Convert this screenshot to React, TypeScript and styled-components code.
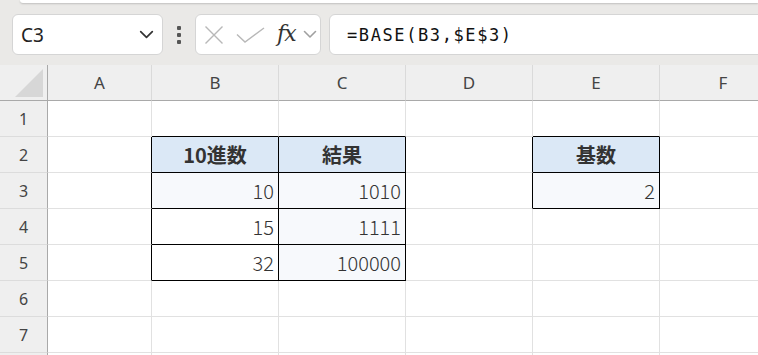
import * as React from "react"
import styled, { createGlobalStyle } from "styled-components"

const GlobalStyle = createGlobalStyle`
    html, body {
        margin: 0;
        padding: 0;
        background: #ffffff;
        overflow: hidden;
    }
    * {
        box-sizing: border-box;
    }
`

const Page = styled.div`
    width: 758px;
    height: 355px;
    overflow: hidden;
    font-family: "Noto Sans", "Noto Sans CJK JP", sans-serif;
`

const Toolbar = styled.div`
    height: 65px;
    background: #eae9e7;
    display: flex;
    flex-direction: column;
`

const TopStrip = styled.div`
    height: 3px;
    margin-left: 20px;
    background: #ffffff;
    border-bottom-left-radius: 4px;
    box-shadow: 0 1px 2px rgba(0, 0, 0, 0.18);
`

const FormulaRow = styled.div`
    display: flex;
    align-items: center;
    margin-top: 11px;
    padding-left: 12px;
    height: 41px;
`

const Box = styled.div`
    height: 41px;
    background: #ffffff;
    border: 1px solid #d5d5d5;
    border-radius: 6px;
    display: flex;
    align-items: center;
`

const NameBox = styled(Box)`
    width: 151px;
    padding: 0 8px 0 8px;
    justify-content: space-between;
    font-size: 19px;
    color: #222;
`

const Dots = styled.div`
    width: 32px;
    display: flex;
    flex-direction: column;
    align-items: center;
    gap: 3px;

    span {
        width: 4px;
        height: 4px;
        border-radius: 1px;
        background: #555;
    }
`

const FxBox = styled(Box)`
    width: 126px;
    padding-left: 8px;
    gap: 12px;
`

const FxText = styled.span`
    font-family: "DejaVu Serif", "Liberation Serif", serif;
    font-style: italic;
    font-weight: 400;
    font-size: 22px;
    letter-spacing: -1px;
    color: #333;
    margin-top: -3px;
    margin-right: -5px;
`

const FormulaBox = styled(Box)`
    flex: 1;
    margin-left: 8px;
    margin-right: -12px;
    padding-left: 17px;
    font-family: "DejaVu Sans Mono", "Liberation Mono", monospace;
    font-size: 17px;
    letter-spacing: 1.6px;
    color: #111;
`

const Sheet = styled.div`
    display: grid;
    grid-template-columns: 48px 104px repeat(5, 127px);
    grid-auto-rows: 36px;
`

const Corner = styled.div`
    background: #efefef;
    border-right: 1px solid #a9a9a9;
    border-bottom: 1px solid #a9a9a9;
    position: relative;

    svg {
        position: absolute;
        left: 15px;
        top: 4px;
    }
`

const ColHeader = styled.div`
    background: #efefef;
    border-right: 1px solid #dadada;
    border-bottom: 1px solid #a9a9a9;
    display: flex;
    align-items: center;
    justify-content: center;
    font-size: 17px;
    color: #444;
`

const RowHeader = styled.div`
    background: #efefef;
    border-right: 1px solid #a9a9a9;
    border-bottom: 1px solid #dcdcdc;
    display: flex;
    align-items: center;
    justify-content: center;
    font-size: 16px;
    color: #444;
`

const Cell = styled.div<{ $fill?: string; $darkRight?: boolean; $darkBottom?: boolean; $head?: boolean }>`
    background: ${(p) => p.$fill || "#ffffff"};
    border-right: 1px solid ${(p) => (p.$darkRight ? "#000" : "#e1e1e1")};
    border-bottom: 1px solid ${(p) => (p.$darkBottom ? "#000" : "#e1e1e1")};
    display: flex;
    align-items: center;
    justify-content: ${(p) => (p.$head ? "center" : "flex-end")};
    padding: 0 4px 0 4px;
    font-family: "Noto Sans CJK JP", "Noto Sans", sans-serif;
    font-size: 20px;
    font-weight: ${(p) => (p.$head ? 700 : 300)};
    color: #333;
`

const cols = ["A", "B", "C", "D", "E", "F"]

type CellData = { v: string; head?: boolean; tint?: boolean }

const data: Record<string, CellData> = {
    B2: { v: "10進数", head: true },
    C2: { v: "結果", head: true },
    E2: { v: "基数", head: true },
    B3: { v: "10", tint: true },
    C3: { v: "1010", tint: true },
    E3: { v: "2", tint: true },
    B4: { v: "15" },
    C4: { v: "1111", tint: true },
    B5: { v: "32" },
    C5: { v: "100000", tint: true },
}

const boxed = (c: number, r: number) => {
    const key = (cols[c] || "") + r
    return key in data
}

const ChevronDown = ({ color, w }: { color: string; w: number }) => (
    <svg width={w} height={w / 2 + 2} viewBox="0 0 14 9" fill="none">
        <path d="M1.5 1.5 L7 7 L12.5 1.5" stroke={color} strokeWidth="1.6" strokeLinecap="round" strokeLinejoin="round" />
    </svg>
)

export default function App() {
    // row 8 only peeks in at the bottom edge, so it gets no number
    const rows = [1, 2, 3, 4, 5, 6, 7, 8]
    return (
        <Page>
            <GlobalStyle />
            <Toolbar>
                <TopStrip />
                <FormulaRow>
                    <NameBox>
                        <span>C3</span>
                        <ChevronDown color="#333" w={15} />
                    </NameBox>
                    <Dots>
                        <span />
                        <span />
                        <span />
                    </Dots>
                    <FxBox>
                        <svg width="20" height="20" viewBox="0 0 20 20" fill="none">
                            <path d="M1.5 1.5 L18.5 18.5 M18.5 1.5 L1.5 18.5" stroke="#b8b8b8" strokeWidth="1.4" />
                        </svg>
                        <svg width="29" height="16" viewBox="0 0 29 16" fill="none">
                            <path d="M1 7.5 L9 15 L28 1" stroke="#b8b8b8" strokeWidth="1.4" />
                        </svg>
                        <FxText>fx</FxText>
                        <ChevronDown color="#a0a0a0" w={14} />
                    </FxBox>
                    <FormulaBox>=BASE(B3,$E$3)</FormulaBox>
                </FormulaRow>
            </Toolbar>
            <Sheet>
                <Corner>
                    <svg width="29" height="29" viewBox="0 0 29 29">
                        <polygon points="0,28 28,28 28,0" fill="#d7d7d7" />
                    </svg>
                </Corner>
                {cols.map((c) => (
                    <ColHeader key={c}>{c}</ColHeader>
                ))}
                {rows.map((r) => (
                    <React.Fragment key={r}>
                        <RowHeader>{r < 8 ? r : null}</RowHeader>
                        {cols.map((c, ci) => {
                            const d = data[c + r]
                            const inBox = boxed(ci, r)
                            return (
                                <Cell
                                    key={c + r}
                                    $head={d?.head}
                                    $fill={d?.head ? "#dbe8f6" : d?.tint ? "#f7f9fc" : undefined}
                                    $darkRight={inBox || boxed(ci + 1, r)}
                                    $darkBottom={inBox || boxed(ci, r + 1)}
                                >
                                    {d?.v}
                                </Cell>
                            )
                        })}
                    </React.Fragment>
                ))}
            </Sheet>
        </Page>
    )
}
